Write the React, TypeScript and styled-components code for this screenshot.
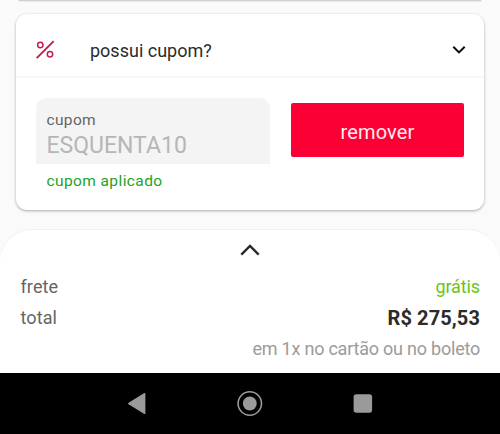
import React from "react";
import styled, {createGlobalStyle, ThemeProvider} from "styled-components";

const theme = {
    colors: {
        pageBg: "#fafafa",
        cardBg: "#ffffff",
        fieldBg: "#f4f4f4",
        divider: "#f8f8f8",
        accent: "#fb0035",
        icon: "#c41d4a",
        font: "#2b2b2b",
        label: "#656565",
        muted: "#9b9b9b",
        success: "#22a326",
        free: "#6cc319",
        navIcon: "#9a9a9a",
    },
};

const App = () => {
    return (
        <ThemeProvider theme={theme}>
            <GlobalStyle/>
            <Screen>
                <PreviousCard/>
                <Coupon/>
                <Summary/>
                <NavigationBar/>
            </Screen>
        </ThemeProvider>
    );
};

export default App;

const Coupon = () => {
    return (
        <Card>
            <CardHeader>
                <svg width="20" height="20" viewBox="0 0 20 20" fill="none" stroke={theme.colors.icon}>
                    <path d="M1.7 18.2L18.7 1.2" strokeWidth="1.9"/>
                    <circle cx="5.3" cy="5" r="2.7" strokeWidth="1.5"/>
                    <circle cx="15" cy="14.3" r="2.7" strokeWidth="1.5"/>
                </svg>
                <CardTitle>possui cupom?</CardTitle>
                <svg width="14" height="8" viewBox="0 0 14 8" fill="none" stroke="#0b0b0b" strokeWidth="2">
                    <path d="M1.3 0.8L7 6.4L12.7 0.8"/>
                </svg>
            </CardHeader>
            <CardBody>
                <FieldWrapper>
                    <Field>
                        <FieldLabel>cupom</FieldLabel>
                        <FieldValue>ESQUENTA10</FieldValue>
                    </Field>
                    <FieldMessage>cupom aplicado</FieldMessage>
                </FieldWrapper>
                <RemoveButton>remover</RemoveButton>
            </CardBody>
        </Card>
    );
};

const Summary = () => {
    return (
        <Sheet>
            <SheetHandle>
                <svg width="20" height="12" viewBox="0 0 20 12" fill="none" stroke="#2a2a2c" strokeWidth="2.4">
                    <path d="M1.3 10.6L10 2L18.7 10.6"/>
                </svg>
            </SheetHandle>
            <Row>
                <RowLabel>frete</RowLabel>
                <FreeShipping>grátis</FreeShipping>
            </Row>
            <Row>
                <RowLabel>total</RowLabel>
                <Total>R$ 275,53</Total>
            </Row>
            <Installments>em 1x no cartão ou no boleto</Installments>
        </Sheet>
    );
};

const NavigationBar = () => {
    return (
        <Nav>
            <svg width="26" height="26" viewBox="0 0 26 26" fill={theme.colors.navIcon}>
                <path d="M4.6 11.7L20.3 2.1Q21.4 1.5 21.4 2.7V22.3Q21.4 23.5 20.3 22.9L4.6 13.3Q3.4 12.5 4.6 11.7Z"/>
            </svg>
            <svg width="26" height="26" viewBox="0 0 26 26">
                <circle cx="12.8" cy="12.5" r="11.7" fill="none" stroke={theme.colors.navIcon} strokeWidth="1.6"/>
                <circle cx="12.8" cy="12.5" r="6.9" fill={theme.colors.navIcon}/>
            </svg>
            <svg width="26" height="26" viewBox="0 0 26 26">
                <rect x="3.6" y="3.2" width="18.5" height="18.6" rx="2.8" fill={theme.colors.navIcon}/>
            </svg>
        </Nav>
    );
};

const GlobalStyle = createGlobalStyle`
    *,
    *::before,
    *::after {
        box-sizing: border-box;
        margin: 0;
        padding: 0;
    }

    body {
        font-family: Roboto, sans-serif;
        color: ${theme.colors.font};
        background-color: ${theme.colors.pageBg};
    }

    svg {
        display: block;
        flex-shrink: 0;
    }
`
const Screen = styled.main`
    display: flex;
    flex-direction: column;
    width: 500px;
    height: 434px;
    overflow: hidden;
`
const PreviousCard = styled.div`
    flex: none;
    height: 1px;
    margin: 0 19px 13px;
    background-color: #cfcfcf;
    box-shadow: 0 0 2px rgba(0, 0, 0, 0.25);
`
const Card = styled.section`
    flex: none;
    height: 196px;
    margin: 0 16px 20px;
    border-radius: 11px;
    background-color: ${theme.colors.cardBg};
    box-shadow: 0 1px 3px rgba(0, 0, 0, 0.32);
`
const CardHeader = styled.header`
    display: flex;
    align-items: center;
    height: 64px;
    padding: 10px 18px 0 19px;
    border-bottom: 2px solid ${theme.colors.divider};
`
const CardTitle = styled.h2`
    flex: 1;
    padding: 2px 0 0 35px;
    font-size: 18px;
    font-weight: 400;
    line-height: 22px;
`
const CardBody = styled.div`
    display: flex;
    align-items: flex-start;
    gap: 21px;
    padding: 20px 20px 0;
`
const FieldWrapper = styled.div`
    width: 234px;
`
const Field = styled.div`
    height: 66px;
    padding: 12px 10px 0;
    border-radius: 10px 10px 0 0;
    background-color: ${theme.colors.fieldBg};
`
const FieldLabel = styled.label`
    display: block;
    padding-left: 0.5px;
    font-size: 15.5px;
    line-height: 20px;
    letter-spacing: 0.35px;
    color: ${theme.colors.label};
`
const FieldValue = styled.span`
    display: block;
    padding-left: 0.5px;
    font-size: 23px;
    line-height: 31px;
    color: #b6b6b6;
`
const FieldMessage = styled.p`
    padding: 7px 10.5px 0;
    font-size: 15.5px;
    line-height: 20px;
    letter-spacing: 0.4px;
    color: ${theme.colors.success};
`
const RemoveButton = styled.button`
    width: 173px;
    height: 54px;
    margin-top: 5px;
    padding-top: 3px;
    border: none;
    border-radius: 2px;
    font-family: inherit;
    font-size: 20px;
    letter-spacing: 0.15px;
    color: #ffe9ee;
    background-color: ${theme.colors.accent};
`
const Sheet = styled.section`
    flex: none;
    height: 143px;
    padding: 0 20px;
    border-radius: 32px 32px 0 0;
    background-color: ${theme.colors.cardBg};
    box-shadow: 0 -1px 1px rgba(0, 0, 0, 0.04);
`
const SheetHandle = styled.div`
    display: flex;
    justify-content: center;
    height: 41px;
    padding-top: 14px;
`
const Row = styled.div`
    display: flex;
    justify-content: space-between;
    height: 31px;
    line-height: 32px;
`
const RowLabel = styled.span`
    padding-left: 0.5px;
    font-size: 18px;
    letter-spacing: 0.1px;
    color: ${theme.colors.label};
`
const FreeShipping = styled.span`
    font-size: 18px;
    letter-spacing: -0.1px;
    color: ${theme.colors.free};
`
const Total = styled.strong`
    font-size: 20px;
    font-weight: 700;
    line-height: 32px;
    letter-spacing: 0.1px;
`
const Installments = styled.p`
    font-size: 18px;
    line-height: 32px;
    letter-spacing: -0.22px;
    text-align: right;
    color: ${theme.colors.muted};
`
const Nav = styled.nav`
    display: flex;
    flex: none;
    align-items: center;
    justify-content: center;
    gap: 87px;
    height: 61px;
    background-color: #000000;
`
